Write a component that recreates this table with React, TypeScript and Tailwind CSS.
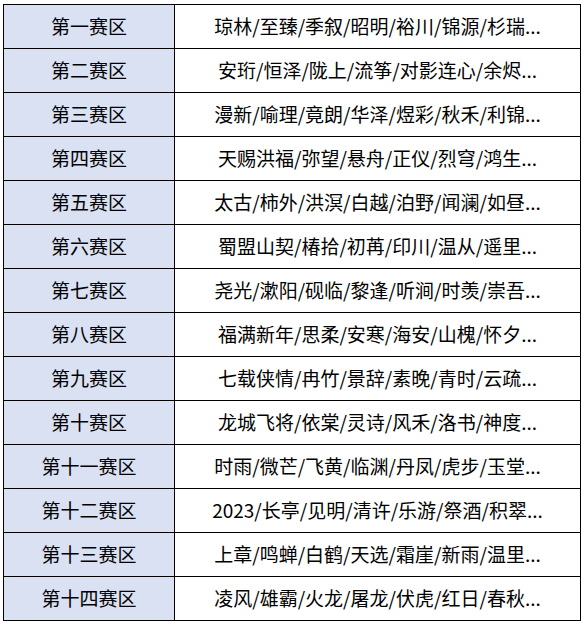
const rows: [string, string][] = [
  ["第一赛区", "琼林/至臻/季叙/昭明/裕川/锦源/杉瑞..."],
  ["第二赛区", "安珩/恒泽/陇上/流筝/对影连心/余烬..."],
  ["第三赛区", "漫新/喻理/竟朗/华泽/煜彩/秋禾/利锦..."],
  ["第四赛区", "天赐洪福/弥望/悬舟/正仪/烈穹/鸿生..."],
  ["第五赛区", "太古/柿外/洪溟/白越/泊野/闻澜/如昼..."],
  ["第六赛区", "蜀盟山契/椿拾/初苒/印川/温从/遥里..."],
  ["第七赛区", "尧光/漱阳/砚临/黎逢/听涧/时羡/崇吾..."],
  ["第八赛区", "福满新年/思柔/安寒/海安/山槐/怀夕..."],
  ["第九赛区", "七载侠情/冉竹/景辞/素晚/青时/云疏..."],
  ["第十赛区", "龙城飞将/依棠/灵诗/风禾/洛书/神度..."],
  ["第十一赛区", "时雨/微芒/飞黄/临渊/丹凤/虎步/玉堂..."],
  ["第十二赛区", "2023/长亭/见明/清许/乐游/祭酒/积翠..."],
  ["第十三赛区", "上章/鸣蝉/白鹤/天选/霜崖/新雨/温里..."],
  ["第十四赛区", "凌风/雄霸/火龙/屠龙/伏虎/红日/春秋..."],
];

export default function App() {
  return (
    <div className="w-[584px] h-[625px] bg-white pt-[4px] pl-[3px] font-['Noto_Sans_CJK_SC',sans-serif] text-[19px] text-black">
      <div className="w-[578px] border-l border-t border-black">
        {rows.map(([zone, names]) => (
          <div key={zone} className="flex h-[44px]">
            <div className="w-[171px] flex items-center justify-center bg-[#d9e1f2] border-r border-b border-black">
              {zone}
            </div>
            <div className="w-[406px] flex items-center justify-center border-r border-b border-black whitespace-nowrap">
              {names}
            </div>
          </div>
        ))}
      </div>
    </div>
  );
}
